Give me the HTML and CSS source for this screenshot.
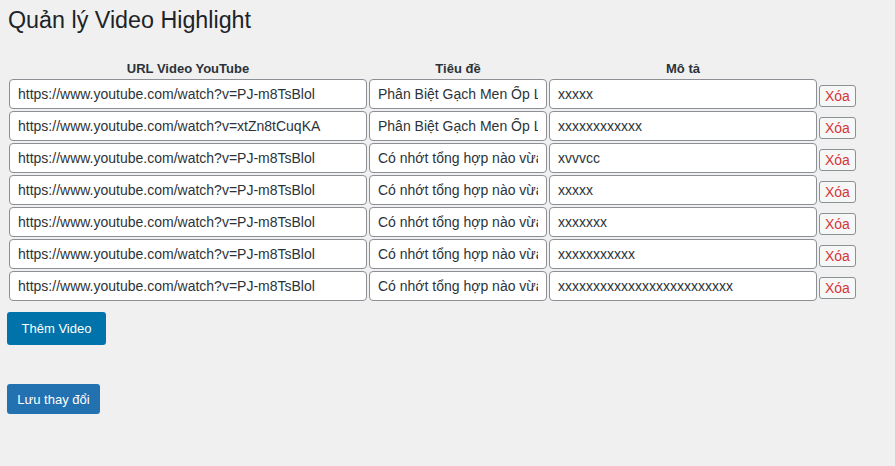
FILE: index.html
```html
<!DOCTYPE html>
<html lang="vi">
<head>
<meta charset="UTF-8">
<meta name="viewport" content="width=device-width, initial-scale=1.0">
<title>Quản lý Video Highlight</title>
<link rel="stylesheet" href="styles.css">
</head>
<body>
<div class="wrap">
  <h1>Quản lý Video Highlight</h1>
  <form>
    <table class="video-table">
      <thead>
        <tr>
          <th>URL Video YouTube</th>
          <th>Tiêu đề</th>
          <th>Mô tả</th>
          <th></th>
        </tr>
      </thead>
      <tbody>
        <tr>
          <td><input class="field field-url" type="text" value="https://www.youtube.com/watch?v=PJ-m8TsBlol"></td>
          <td><input class="field field-title" type="text" value="Phân Biệt Gạch Men Ốp Lát Chuẩn"></td>
          <td><input class="field field-desc" type="text" value="xxxxx"></td>
          <td><button type="button" class="btn-remove">Xóa</button></td>
        </tr>
        <tr>
          <td><input class="field field-url" type="text" value="https://www.youtube.com/watch?v=xtZn8tCuqKA"></td>
          <td><input class="field field-title" type="text" value="Phân Biệt Gạch Men Ốp Lát Chuẩn"></td>
          <td><input class="field field-desc" type="text" value="xxxxxxxxxxxx"></td>
          <td><button type="button" class="btn-remove">Xóa</button></td>
        </tr>
        <tr>
          <td><input class="field field-url" type="text" value="https://www.youtube.com/watch?v=PJ-m8TsBlol"></td>
          <td><input class="field field-title" type="text" value="Có nhớt tổng hợp nào vừa rẻ"></td>
          <td><input class="field field-desc" type="text" value="xvvvcc"></td>
          <td><button type="button" class="btn-remove">Xóa</button></td>
        </tr>
        <tr>
          <td><input class="field field-url" type="text" value="https://www.youtube.com/watch?v=PJ-m8TsBlol"></td>
          <td><input class="field field-title" type="text" value="Có nhớt tổng hợp nào vừa rẻ"></td>
          <td><input class="field field-desc" type="text" value="xxxxx"></td>
          <td><button type="button" class="btn-remove">Xóa</button></td>
        </tr>
        <tr>
          <td><input class="field field-url" type="text" value="https://www.youtube.com/watch?v=PJ-m8TsBlol"></td>
          <td><input class="field field-title" type="text" value="Có nhớt tổng hợp nào vừa rẻ"></td>
          <td><input class="field field-desc" type="text" value="xxxxxxx"></td>
          <td><button type="button" class="btn-remove">Xóa</button></td>
        </tr>
        <tr>
          <td><input class="field field-url" type="text" value="https://www.youtube.com/watch?v=PJ-m8TsBlol"></td>
          <td><input class="field field-title" type="text" value="Có nhớt tổng hợp nào vừa rẻ"></td>
          <td><input class="field field-desc" type="text" value="xxxxxxxxxxx"></td>
          <td><button type="button" class="btn-remove">Xóa</button></td>
        </tr>
        <tr>
          <td><input class="field field-url" type="text" value="https://www.youtube.com/watch?v=PJ-m8TsBlol"></td>
          <td><input class="field field-title" type="text" value="Có nhớt tổng hợp nào vừa rẻ"></td>
          <td><input class="field field-desc" type="text" value="xxxxxxxxxxxxxxxxxxxxxxxxx"></td>
          <td><button type="button" class="btn-remove">Xóa</button></td>
        </tr>
      </tbody>
    </table>
    <button type="button" class="btn btn-add">Thêm Video</button>
    <div class="submit-row">
      <button type="submit" class="btn btn-save">Lưu thay đổi</button>
    </div>
  </form>
</div>
</body>
</html>
```

FILE: styles.css
```css
* {
  box-sizing: border-box;
}

body {
  margin: 0;
  background-color: #f0f0f1;
  color: #1d2327;
  font-family: "Liberation Sans", "Noto Sans", sans-serif;
  font-size: 13px;
}

.wrap {
  padding: 0 7px;
}

h1 {
  font-size: 23.3px;
  font-weight: 400;
  line-height: 29px;
  margin: 0;
  padding: 6px 0 0 1px;
  color: #1d2327;
}

.video-table {
  border-collapse: separate;
  border-spacing: 2px;
  margin: 23px 0 0 0;
}

.video-table th {
  font-size: 13px;
  font-weight: 700;
  color: #2c3338;
  text-align: center;
  padding: 0;
  height: 17px;
  line-height: 17px;
}

.video-table td {
  padding: 0;
  height: 30px;
  vertical-align: middle;
}

.field {
  display: block;
  height: 30px;
  margin: 0;
  padding: 0 8px;
  border: 1px solid #8c8f94;
  border-radius: 4px;
  background-color: #fff;
  color: #2c3338;
  font-family: inherit;
  font-size: 14px;
}

.field-url {
  width: 358px;
}

.field-title {
  width: 178px;
}

.field-desc {
  width: 268px;
}

.btn-remove {
  display: block;
  height: 22px;
  margin-top: 3px;
  padding: 0 5px;
  border: 1px solid #8c8f94;
  border-radius: 3px;
  background-color: #f6f7f7;
  color: #d63638;
  font-family: inherit;
  font-size: 14px;
  cursor: pointer;
}

.btn {
  display: inline-block;
  border: 0;
  border-radius: 3px;
  color: #fff;
  font-family: inherit;
  font-size: 13px;
  cursor: pointer;
}

.btn-add {
  margin-top: 9px;
  width: 99px;
  height: 33px;
  background-color: #0073aa;
}

.submit-row {
  padding-top: 39px;
}

.btn-save {
  width: 93px;
  height: 30px;
  background-color: #2271b1;
}
```
